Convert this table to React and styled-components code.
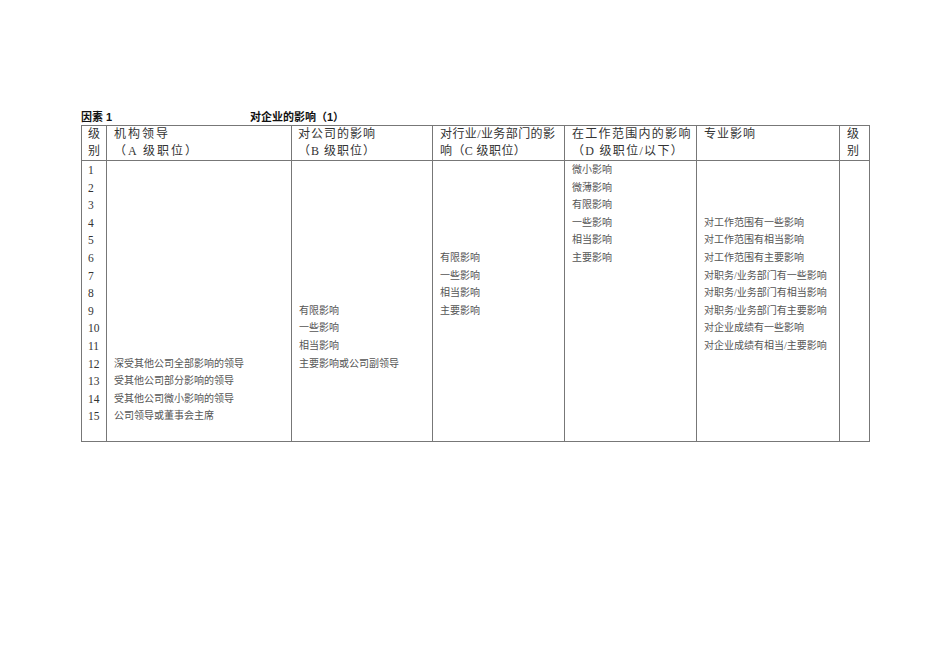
import React from 'react';
import styled, { createGlobalStyle } from 'styled-components';

const GlobalStyle = createGlobalStyle`
  html, body {
    margin: 0;
    padding: 0;
    background: #ffffff;
  }
`;

const Page = styled.div`
  width: 950px;
  height: 672px;
  box-sizing: border-box;
  padding: 109px 0 0 81px;
  font-family: 'Liberation Serif', 'Noto Sans CJK SC', serif;
  color: #333;
`;

const TitleRow = styled.div`
  display: flex;
  height: 16px;
  line-height: 16px;
  font-family: 'Liberation Sans', 'Noto Sans CJK SC', sans-serif;
  font-size: 11px;
  font-weight: bold;
  color: #111;
`;

const TitleLeft = styled.span`
  width: 169px;
`;

const Table = styled.table`
  width: 789px;
  table-layout: fixed;
  border-collapse: collapse;
  border: 1px solid #777;
`;

const HeadRow = styled.tr`
  height: 34px;
`;

const HeadCell = styled.th`
  border: 1px solid #777;
  padding: 0 ${(p) => p.$pad || 7}px;
  vertical-align: top;
  text-align: left;
  font-weight: normal;
  font-size: 12px;
  line-height: 17px;
  letter-spacing: ${(p) => (p.$spacing !== undefined ? p.$spacing : 1)}px;
  color: #333;
  white-space: nowrap;
  overflow: hidden;
`;

const BodyRow = styled.tr`
  height: ${(p) => p.$h}px;
`;

const NumCell = styled.td`
  border-left: 1px solid #777;
  border-right: 1px solid #777;
  padding: 1px 6px 0;
  font-size: 11.5px;
  line-height: 16.6px;
  color: #333;
  vertical-align: middle;
`;

const TextCell = styled.td`
  border-left: 1px solid #777;
  border-right: 1px solid #777;
  padding: 1px 7px 0;
  font-size: 10px;
  line-height: 16.6px;
  color: #555;
  white-space: nowrap;
  overflow: hidden;
  vertical-align: middle;
`;

const widths = [25, 185, 141, 132, 132, 143, 30];

const columns = [
  { start: 12, items: ['深受其他公司全部影响的领导', '受其他公司部分影响的领导', '受其他公司微小影响的领导', '公司领导或董事会主席'] },
  { start: 9, items: ['有限影响', '一些影响', '相当影响', '主要影响或公司副领导'] },
  { start: 6, items: ['有限影响', '一些影响', '相当影响', '主要影响'] },
  { start: 1, items: ['微小影响', '微薄影响', '有限影响', '一些影响', '相当影响', '主要影响'] },
  {
    start: 4,
    items: [
      '对工作范围有一些影响',
      '对工作范围有相当影响',
      '对工作范围有主要影响',
      '对职务/业务部门有一些影响',
      '对职务/业务部门有相当影响',
      '对职务/业务部门有主要影响',
      '对企业成绩有一些影响',
      '对企业成绩有相当/主要影响',
    ],
  },
];

function cellText(col, level) {
  const idx = level - col.start;
  return idx >= 0 && idx < col.items.length ? col.items[idx] : '';
}

export default function App() {
  const levels = Array.from({ length: 15 }, (_, i) => i + 1);

  return (
    <Page>
      <GlobalStyle />
      <TitleRow>
        <TitleLeft>因素 1</TitleLeft>
        <span>对企业的影响（1）</span>
      </TitleRow>
      <Table>
        <colgroup>
          {widths.map((w, i) => (
            <col key={i} style={{ width: w }} />
          ))}
        </colgroup>
        <thead>
          <HeadRow>
            <HeadCell $pad={6}>级<br />别</HeadCell>
            <HeadCell $spacing={2}>机构领导<br />（A 级职位）</HeadCell>
            <HeadCell $pad={6}>对公司的影响<br />（B 级职位）</HeadCell>
            <HeadCell $spacing={0.4}>对行业/业务部门的影<br />响（C 级职位）</HeadCell>
            <HeadCell $spacing={1.3}>在工作范围内的影响<br />（D 级职位/以下）</HeadCell>
            <HeadCell>专业影响</HeadCell>
            <HeadCell>级<br />别</HeadCell>
          </HeadRow>
        </thead>
        <tbody>
          {levels.map((lvl) => (
            <BodyRow key={lvl} $h={17.6}>
              <NumCell>{lvl}</NumCell>
              {columns.map((col, i) => (
                <TextCell key={i}>{cellText(col, lvl)}</TextCell>
              ))}
              <TextCell />
            </BodyRow>
          ))}
          <BodyRow $h={17}>
            <NumCell />
            {columns.map((_, i) => (
              <TextCell key={i} />
            ))}
            <TextCell />
          </BodyRow>
        </tbody>
      </Table>
    </Page>
  );
}
